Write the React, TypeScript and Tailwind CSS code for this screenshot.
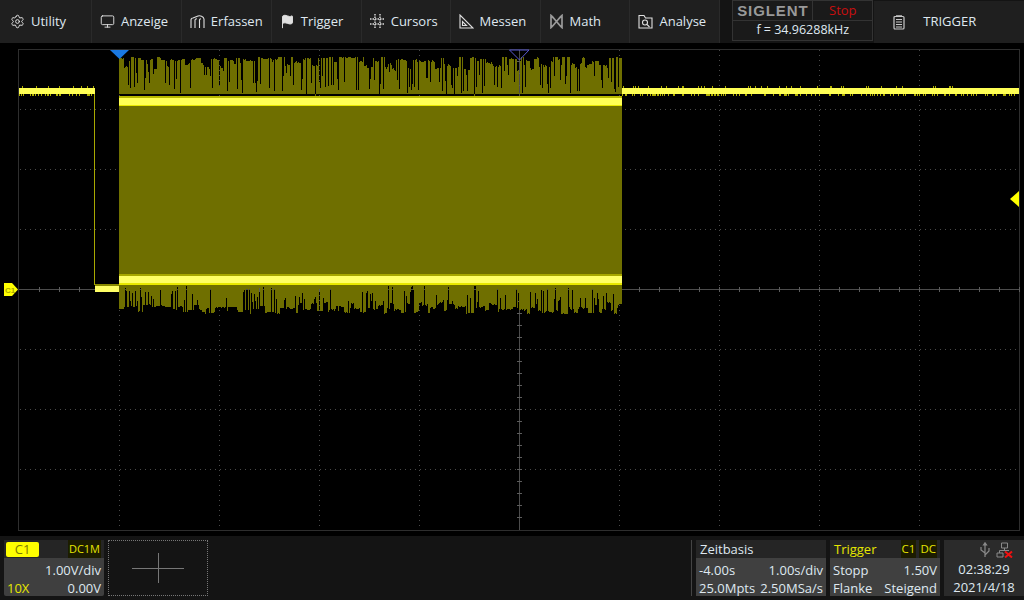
import { Settings, Monitor, Flag } from "lucide-react";
import type { ReactNode } from "react";

function makeRng(seed: number) {
  let s = seed;
  return () => {
    s = (s * 1664525 + 1013904223) % 4294967296;
    return s / 4294967296;
  };
}

const rng = makeRng(20210418);
let upperNoise = "";
let lowerNoise = "";
function blocks(x0: number, x1: number, emit: (x: number, h: number, gap: number) => void) {
  let x = x0;
  while (x < x1) {
    const run = 1 + Math.floor(rng() * 6);
    const h = rng();
    for (let i = 0; i < run && x < x1; i++, x++) {
      emit(x, h + (rng() - 0.5) * 0.12, rng());
    }
  }
}
blocks(119, 622, (x, h, g) => {
  const top = g < 0.13 ? 84 + rng() * 12 : g < 0.22 ? 70 + rng() * 14 : 57 + h * h * 13;
  upperNoise += `M${x + 0.5} ${top.toFixed(0)}V94`;
});
blocks(119, 622, (x, h, g) => {
  const ease = x < 300 ? 0.7 : 1;
  const bottom = g < 0.12 ? 286 + rng() * 8 : g < 0.22 ? 294 + rng() * 8 : 314 - h * 12 * ease - (x < 200 ? 2 : 0);
  lowerNoise += `M${x + 0.5} 284V${bottom.toFixed(0)}`;
});

function levelTicks(x0: number, x1: number, seed: number) {
  const r = makeRng(seed);
  let d = "";
  for (let x = x0; x < x1; x++) {
    if (r() < 0.35) d += `M${x + 0.5} 94V96`;
    if (r() < 0.1) d += `M${x + 0.5} 86V88`;
  }
  return d;
}

const gridX = [119, 219, 319, 419, 519, 619, 719, 819, 919];
const gridY = [109, 169, 229, 289, 349, 409, 469];
const ticksH = Array.from({ length: 50 }, (_, i) => 39 + i * 20);
const ticksV = Array.from({ length: 39 }, (_, i) => 61 + i * 12);

function Menu({ icon, label, width, pad }: { icon: ReactNode; label: string; width: string; pad: string }) {
  return (
    <button className={`${width} ${pad} h-[43px] flex items-center gap-[6px] border-r border-[#2a2a2a] bg-[#1f1f1f] text-[#dfe8f0] text-[13px]`}>
      <span className="w-[15px] h-[16px] flex items-center justify-center text-[#e0e0e0]">{icon}</span>
      <span>{label}</span>
    </button>
  );
}

const iconClass = "w-[15px] h-[15px]";

export default function App() {
  return (
    <div
      className="w-[1024px] h-[600px] flex flex-col bg-black overflow-hidden"
      style={{ fontFamily: '"Open Sans", sans-serif' }}
    >
      <header className="h-[43px] flex bg-[#141414] shrink-0">
        <Menu width="w-[92px]" pad="pl-[10px]" label="Utility" icon={<Settings className={iconClass} strokeWidth={1.6} />} />
        <Menu width="w-[90px]" pad="pl-[8px]" label="Anzeige" icon={<Monitor className={iconClass} strokeWidth={1.5} />} />
        <Menu
          width="w-[90px]"
          pad="pl-[8px]"
          label="Erfassen"
          icon={
            <svg viewBox="0 0 15 15" className={iconClass} fill="none" stroke="currentColor" strokeWidth="1.1">
              <path d="M1 14V6C1 4.500 2 4 3 4L8 2C10 1.500 13.500 2 14 5V14M5 14V6C5 5 6 4.700 7 4.700M9.500 14V6C9.500 5 10 4.700 11 4.700" />
            </svg>
          }
        />
        <Menu width="w-[90px]" pad="pl-[8px]" label="Trigger" icon={<Flag className={iconClass} fill="currentColor" strokeWidth={1.5} />} />
        <Menu
          width="w-[89px]"
          pad="pl-[8px]"
          label="Cursors"
          icon={
            <svg viewBox="0 0 15 15" className={iconClass} stroke="currentColor" strokeWidth="1.4" strokeDasharray="1.500 1">
              <path d="M5 0V15M10 0V15M0 5H15M0 10H15" />
            </svg>
          }
        />
        <Menu
          width="w-[90px]"
          pad="pl-[8px]"
          label="Messen"
          icon={
            <svg viewBox="0 0 15 15" className={iconClass} fill="none" stroke="currentColor" strokeWidth="1.1">
              <path d="M1 1V14H14ZM3.500 7.500V11.500H7.500Z" />
            </svg>
          }
        />
        <Menu
          width="w-[90px]"
          pad="pl-[8px]"
          label="Math"
          icon={
            <svg viewBox="0 0 15 15" className={iconClass} fill="none" stroke="#9a9a9a" strokeWidth="1.700">
              <path d="M2 1.500C5 4 5.500 5.500 7.500 7.500C9.500 5.500 10 4 13 1.500V13.500C10 11 9.500 9.500 7.500 7.500C5.500 9.500 5 11 2 13.500Z" />
            </svg>
          }
        />
        <Menu
          width="w-[90px]"
          pad="pl-[8px]"
          label="Analyse"
          icon={
            <svg viewBox="0 0 15 15" className={iconClass} fill="none" stroke="currentColor" strokeWidth="1.100">
              <path d="M1 14V1.500H6L7.500 4H14V14Z" />
              <circle cx="7" cy="8.500" r="2.500" />
              <path d="M9 10.500L11.500 13" />
            </svg>
          }
        />
        <div className="w-[12px]" />
        <div className="w-[141px] h-[41px] flex flex-col border border-[#333] bg-[#1a1a1a]">
          <div className="h-[20px] flex border-b border-[#333]">
            <div className="w-[80px] border-r border-[#333] flex items-center justify-center overflow-hidden">
              <span
                className="text-[#999999] text-[15px] leading-none font-bold tracking-[0.9px]"
                style={{ fontFamily: '"Liberation Sans", sans-serif' }}
              >
                SIGLENT
              </span>
            </div>
            <div className="flex-1 flex items-center justify-center text-[#c80f0f] text-[13px]">Stop</div>
          </div>
          <div className="flex-1 flex items-center justify-center text-[#dfe8f0] text-[12.5px]">f = 34.96288kHz</div>
        </div>
        <div className="w-[150px] ml-[1px] mt-[1px] h-[42px] flex items-center bg-[#1f1f1f] text-[#dfe8f0] text-[13px]">
          <svg viewBox="0 0 12 15" className="w-[12px] h-[15px] ml-[19px]" fill="none" stroke="#c8c8c8" strokeWidth="1.200">
            <rect x="1" y="1.500" width="10" height="12.500" rx="1" />
            <path d="M3 0.800H9M3 4.500H9M3 7H9M3 9.500H9M3 12H9" />
          </svg>
          <span className="ml-[18px]">TRIGGER</span>
        </div>
      </header>

      <svg viewBox="0 43 1024 493" className="w-[1024px] h-[493px] block shrink-0">
        <rect x="0" y="43" width="1024" height="493" fill="#000" />
        <g stroke="#4a4a4a" strokeWidth="1" strokeDasharray="1 4" fill="none">
          {gridX.map((x) => (
            <path key={x} d={`M${x + 0.5} 50V530`} />
          ))}
          {gridY.map((y) => (
            <path key={y} d={`M20 ${y + 0.5}H1018`} />
          ))}
        </g>
        <rect x="18.500" y="49.500" width="1001" height="481" fill="none" stroke="#2e2e2e" />
        <path d="M19 289.500H1019M519.500 50V530" stroke="#4c4c4c" />
        <g stroke="#5c5c5c">
          {ticksH.map((x) => (
            <path key={x} d={`M${x + 0.5} 287V292`} />
          ))}
          {ticksV.map((y) => (
            <path key={y} d={`M517 ${y + 0.5}H522`} />
          ))}
        </g>

        <g shapeRendering="crispEdges">
          <path d={upperNoise} stroke="#6f6f00" />
          <path d={lowerNoise} stroke="#6f6f00" />
          <rect x="119" y="96" width="503" height="189" fill="#6f6f00" />
          <rect x="119" y="96" width="503" height="2" fill="#b9b900" />
          <rect x="119" y="98" width="503" height="7" fill="#ffff55" />
          <rect x="119" y="105" width="503" height="1" fill="#e8e800" />
          <rect x="119" y="274" width="503" height="2" fill="#a8a800" />
          <rect x="119" y="276" width="503" height="7" fill="#ffff66" />
          <rect x="119" y="283" width="503" height="2" fill="#e8e800" />

          <path d={levelTicks(19, 95, 7)} stroke="#b0b000" />
          <path d={levelTicks(622, 1019, 11)} stroke="#b0b000" />
          <rect x="19" y="88" width="76" height="6" fill="#ffff55" />
          <rect x="622" y="88" width="397" height="6" fill="#ffff55" />
          <rect x="94" y="94" width="1" height="191" fill="#a8a800" />
          <rect x="95" y="286" width="24" height="6" fill="#ffff66" />
          <rect x="95" y="284" width="24" height="2" fill="#8a8a00" />
        </g>

        <path d="M110 50H129L119.500 59Z" fill="#1a78e0" />
        <path d="M509.500 50H529L519.500 60Z" fill="none" stroke="#5a5ad0" />
        <path d="M1019 191V207L1010 199Z" fill="#ffff00" />
        <path d="M4 283H12L18 289.500L12 296H4Z" fill="#ffff00" />
        <text x="5" y="293" fontSize="8" fontWeight="700" fill="#a8a800" fontFamily='"Liberation Sans", sans-serif'>
          C1
        </text>
      </svg>

      <footer className="h-[64px] flex items-start pt-[4px] bg-[#141414] text-[#dfe8f0] text-[13px] leading-[18px] shrink-0">
        <div className="w-[100px] h-[56px] ml-[4px] rounded-[2px] bg-[#3f3f3f] flex flex-col">
          <div className="h-[18px] flex items-center justify-between bg-[#252525] pl-[2px] pr-[3px]">
            <span className="w-[33px] h-[15px] flex items-center justify-center rounded-[2px] bg-[#ffff00] text-[#7c7c00] text-[13px]">
              C1
            </span>
            <span className="text-[#e6e600] text-[11px] bg-[#1c1c00] px-[1px]">DC1M</span>
          </div>
          <div className="flex-1 px-[3px] pt-[3px] flex flex-col">
            <div className="text-right">1.00V/div</div>
            <div className="flex justify-between">
              <span className="text-[#e6e600]">10X</span>
              <span>0.00V</span>
            </div>
          </div>
        </div>
        <div className="w-[100px] h-[56px] ml-[4px] border border-dotted border-[#777] flex items-center justify-center relative">
          <div className="w-[52px] h-[1px] bg-[#777]" />
          <div className="absolute w-[1px] h-[30px] bg-[#777]" />
        </div>
        <div className="w-[1px] h-[56px] ml-[483px] bg-[#444]" />
        <div className="w-[130px] h-[56px] ml-[4px] bg-[#404040] flex flex-col">
          <div className="h-[18px] bg-[#252525] px-[4px] flex items-center">Zeitbasis</div>
          <div className="flex-1 px-[3px] pt-[3px] flex flex-col">
            <div className="flex justify-between"><span>-4.00s</span><span>1.00s/div</span></div>
            <div className="flex justify-between"><span>25.0Mpts</span><span>2.50MSa/s</span></div>
          </div>
        </div>
        <div className="w-[110px] h-[56px] ml-[4px] bg-[#404040] flex flex-col">
          <div className="h-[18px] bg-[#252525] pl-[4px] pr-[3px] flex items-center justify-between">
            <span className="text-[#e6e600]">Trigger</span>
            <span className="text-[#e6e600] text-[11.5px] flex gap-[3px]">
              <span className="bg-[#1c1c00] px-[1px]">C1</span>
              <span className="bg-[#1c1c00] px-[1px]">DC</span>
            </span>
          </div>
          <div className="flex-1 px-[3px] pt-[3px] flex flex-col">
            <div className="flex justify-between"><span>Stopp</span><span>1.50V</span></div>
            <div className="flex justify-between"><span>Flanke</span><span>Steigend</span></div>
          </div>
        </div>
        <div className="w-[80px] h-[56px] ml-[4px] bg-[#2b2b2b] flex flex-col items-center">
          <div className="h-[21px] w-full flex items-center justify-end gap-[5px] pr-[11px]">
            <svg viewBox="0 0 12 16" className="w-[12px] h-[16px]" fill="none" stroke="#8a8a8a" strokeWidth="1.200">
              <path d="M6 1V15M6 11L2 8V5M6 13L10 9V6" />
              <path d="M4.500 3L6 0.800L7.500 3Z" fill="#8a8a8a" />
            </svg>
            <svg viewBox="0 0 17 16" className="w-[17px] h-[16px]" fill="none">
              <path d="M5.500 1H11.500V6H5.500ZM1 11H7V15H1ZM8.500 6V8.500M3.500 11V8.500H13" stroke="#8a8a8a" />
              <path d="M9 9.500L16 15.500M16 9.500L9 15.500" stroke="#f01010" strokeWidth="2" />
            </svg>
          </div>
          <div className="leading-[18px]">02:38:29</div>
          <div className="leading-[18px]">2021/4/18</div>
        </div>
      </footer>
    </div>
  );
}
